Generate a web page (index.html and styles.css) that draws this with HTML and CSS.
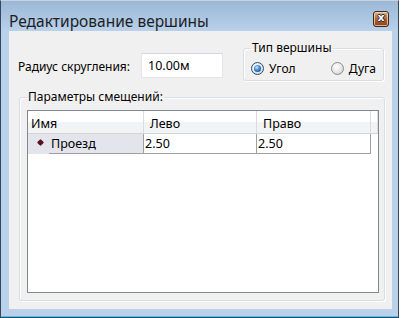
FILE: index.html
```html
<!DOCTYPE html>
<html lang="ru">
<head>
  <meta charset="UTF-8">
  <title>Редактирование вершины</title>
  <link rel="stylesheet" href="styles.css">
</head>
<body>
  <div class="window">
    <div class="titlebar">
      <span class="title">Редактирование вершины</span>
      <span class="close">x</span>
    </div>

    <div class="client">
      <div class="top-row">
        <label class="radius-label" for="radius">Радиус скругления:</label>
        <input class="radius-input" id="radius" type="text" value="10.00м">

        <fieldset class="group type-group">
          <legend>Тип вершины</legend>
          <div class="radios">
            <span class="radio"><span class="radio-box checked"><span class="dot"></span></span>Угол</span>
            <span class="radio"><span class="radio-box"></span>Дуга</span>
          </div>
        </fieldset>
      </div>

      <fieldset class="group offsets">
        <legend>Параметры смещений:</legend>
        <div class="grid">
          <div class="grid-head">
            <div class="hcell">Имя</div>
            <div class="hcell">Лево</div>
            <div class="hcell">Право</div>
            <div class="hcell"></div>
          </div>
          <div class="grid-row">
            <div class="cell name-cell">
              <span class="bullet"></span>
              <span class="name">Проезд</span>
            </div>
            <div class="cell">2.50</div>
            <div class="cell">2.50</div>
          </div>
        </div>
      </fieldset>
    </div>
  </div>
</body>
</html>
```

FILE: styles.css
```css
/* цвета окна в стиле Windows 7 Basic */
:root {
  --frame: #b9d1ea;
  --caption-top: #9bb8d7;
  --client-bg: #f0f0f0;
  --group-line: #d5dfe5;
  --grid-border: #828790;
  --cell-line: #a0a0a0;
  --text: #000000;
}

body {
  margin: 0;
  background: #ffffff;
  font-family: "Noto Sans", "Open Sans", sans-serif;
  font-size: 12px;
  color: var(--text);
}

.window {
  width: 399px;
  height: 318px;
  box-sizing: border-box;
  border: 1px solid #34475c;
  border-top-color: #c9d2dc;
  padding: 0 6px 8px 8px;
  background: linear-gradient(var(--caption-top), var(--frame) 30px);
  box-shadow: inset 0 -1px 0 #44c6f2;
  display: flex;
  flex-direction: column;
}

.titlebar {
  height: 30px;
  box-sizing: border-box;
  padding-top: 10px;
  display: flex;
  align-items: flex-start;
}

.title {
  font-size: 15.5px;
  line-height: 20px;
  color: #1e1e1e;
}

.close {
  margin-left: auto;
  margin-right: 3px;
  width: 16px;
  height: 16px;
  box-sizing: border-box;
  border: 1px solid #3a2a22;
  border-radius: 3px;
  background: linear-gradient(#e2b58b, #b8683a 45%, #8e3f17);
  box-shadow: inset 0 0 0 1px rgba(255, 225, 190, 0.7);
  color: #ffffff;
  font: bold 11px/12px "DejaVu Sans", sans-serif;
  text-align: center;
  text-shadow: 1px 0 #1d2b4a, -1px 0 #1d2b4a, 0 1px #1d2b4a, 0 -1px #1d2b4a;
}

.client {
  flex: 1;
  background: var(--client-bg);
  display: flex;
  flex-direction: column;
}

.top-row {
  display: flex;
  align-items: flex-start;
  padding: 8px 0 0 9px;
}

.radius-label {
  width: 123px;
  margin-top: 19px;
  line-height: 18px;
  font-size: 12px;
}

.radius-input {
  width: 82px;
  height: 25px;
  box-sizing: border-box;
  margin: 14px 0 0 0;
  padding: 0 0 0 6px;
  border: 1px solid #e3e4ea;
  border-top-color: #d3d5dc;
  background: #ffffff;
  font-family: inherit;
  font-size: 12.5px;
  color: var(--text);
}

.group {
  margin: 0;
  border: 1px solid var(--group-line);
  border-radius: 3px;
  box-shadow: inset 1px 1px 0 #ffffff, 1px 1px 0 #ffffff;
}

.group legend {
  padding: 0 1px;
  line-height: 18px;
  font-size: 12px;
}

.type-group {
  width: 141px;
  box-sizing: border-box;
  margin: 0 8px 0 auto;
  padding: 2px 7px 3px;
}

.radios {
  display: flex;
  justify-content: space-between;
  align-items: center;
  height: 18px;
}

.radio {
  display: flex;
  align-items: center;
  gap: 5px;
  font-size: 12px;
}

.radio-box {
  width: 13px;
  height: 13px;
  box-sizing: border-box;
  border-radius: 50%;
  border: 1px solid #8a8c90;
  background: radial-gradient(circle at 40% 35%, #ffffff, #e2e2e2 60%, #c4c4c4);
  display: flex;
  align-items: center;
  justify-content: center;
}

.radio-box.checked {
  border-color: #2b4b6e;
}

.dot {
  width: 7px;
  height: 7px;
  border-radius: 50%;
  background: radial-gradient(circle at 40% 35%, #cde6ff, #3c87d8 45%, #0d2f6a);
}

.offsets {
  flex: 1;
  margin: 7px 8px 8px 10px;
  padding: 4px 5px 7px 7px;
}

.grid {
  height: 183px;
  box-sizing: border-box;
  border: 1px solid var(--grid-border);
  background: #ffffff;
}

.grid-head,
.grid-row {
  display: grid;
  grid-template-columns: 116px 113px 114px 1fr;
}

.grid-head {
  height: 23px;
  box-sizing: border-box;
  border-bottom: 1px solid #d5d5d5;
  background: linear-gradient(#ffffff 50%, #f2f3f5 50%);
}

.hcell {
  padding: 4px 0 0 6px;
  border-right: 1px solid #dcdcdc;
  line-height: 17px;
  font-size: 12.5px;
}

.hcell:first-child {
  padding-left: 3px;
}

.grid-row {
  height: 20px;
}

.cell {
  padding-left: 1px;
  border-right: 1px solid var(--cell-line);
  border-bottom: 1px solid var(--cell-line);
  line-height: 19px;
  font-size: 12.5px;
}

.name-cell {
  display: flex;
  padding: 0;
  border-bottom: none;
  background: #e4e4ec;
}

.bullet {
  width: 5px;
  height: 5px;
  margin: 6px 6px 0 10px;
  border-radius: 1px;
  background: #5c0f1e;
  transform: rotate(45deg);
}

.name {
  flex: 1;
  padding-left: 2px;
  border-bottom: 1px solid var(--cell-line);
}
```
